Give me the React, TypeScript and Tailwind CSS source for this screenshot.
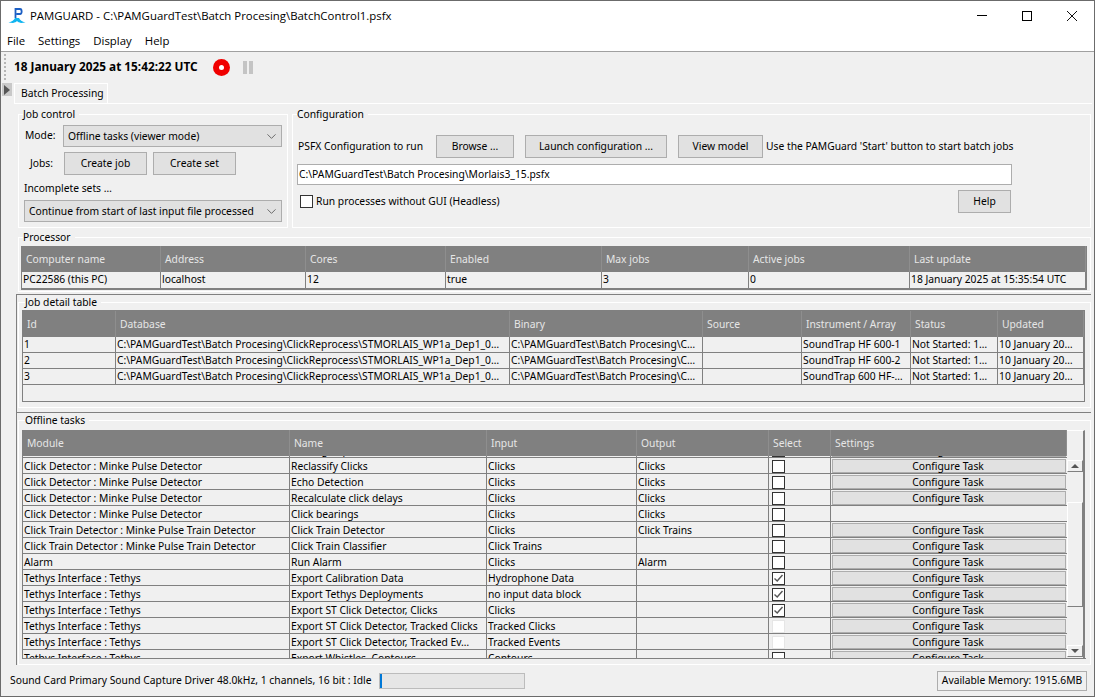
import type { ReactNode } from "react";
import { ChevronDown } from "lucide-react";

const processorCols = "grid-cols-[139px_145px_140px_156px_147px_161px_176px]";
const jobCols = "grid-cols-[93px_394px_193px_99px_109px_87px_86px]";
const taskCols = "grid-cols-[267px_197px_150px_132px_62px_236px]";

const processorHeader = ["Computer name", "Address", "Cores", "Enabled", "Max jobs", "Active jobs", "Last update"];
const processorRow = ["PC22586 (this PC)", "localhost", "12", "true", "3", "0", "18 January 2025 at 15:35:54 UTC"];

const jobHeader = ["Id", "Database", "Binary", "Source", "Instrument / Array", "Status", "Updated"];
const dbPath = "C:\\PAMGuardTest\\Batch Procesing\\ClickReprocess\\STMORLAIS_WP1a_Dep1_0…";
const binPath = "C:\\PAMGuardTest\\Batch Procesing\\C…";
const jobRows = [
  ["1", dbPath, binPath, "", "SoundTrap HF 600-1", "Not Started: 1…", "10 January 20…"],
  ["2", dbPath, binPath, "", "SoundTrap HF 600-2", "Not Started: 1…", "10 January 20…"],
  ["3", dbPath, binPath, "", "SoundTrap 600 HF-…", "Not Started: 1…", "10 January 20…"],
];

const taskHeader = ["Module", "Name", "Input", "Output", "Select", "Settings"];
const minke = "Click Detector : Minke Pulse Detector";
const train = "Click Train Detector : Minke Pulse Train Detector";
const tethys = "Tethys Interface : Tethys";

type Task = { module: string; name: string; input: string; output: string; state: "off" | "on" | "disabled"; noConfig?: boolean };

const tasks: Task[] = [
  { module: minke, name: "Reassign Species", input: "Clicks", output: "Clicks", state: "off" },
  { module: minke, name: "Reclassify Clicks", input: "Clicks", output: "Clicks", state: "off" },
  { module: minke, name: "Echo Detection", input: "Clicks", output: "Clicks", state: "off" },
  { module: minke, name: "Recalculate click delays", input: "Clicks", output: "Clicks", state: "off" },
  { module: minke, name: "Click bearings", input: "Clicks", output: "Clicks", state: "off", noConfig: true },
  { module: train, name: "Click Train Detector", input: "Clicks", output: "Click Trains", state: "off" },
  { module: train, name: "Click Train Classifier", input: "Click Trains", output: "", state: "off" },
  { module: "Alarm", name: "Run Alarm", input: "Clicks", output: "Alarm", state: "off" },
  { module: tethys, name: "Export Calibration Data", input: "Hydrophone Data", output: "", state: "on" },
  { module: tethys, name: "Export Tethys Deployments", input: "no input data block", output: "", state: "on" },
  { module: tethys, name: "Export ST Click Detector, Clicks", input: "Clicks", output: "", state: "on" },
  { module: tethys, name: "Export ST Click Detector, Tracked Clicks", input: "Tracked Clicks", output: "", state: "disabled" },
  { module: tethys, name: "Export ST Click Detector, Tracked Ev…", input: "Tracked Events", output: "", state: "disabled" },
  { module: tethys, name: "Export Whistles, Contours", input: "Contours", output: "", state: "off" },
];

function GroupBox({ title, className, legendClass = "", children }: { title: string; className: string; legendClass?: string; children: ReactNode }) {
  return (
    <fieldset className={`border border-white min-w-0 ${className}`}>
      <legend className={`pr-[4px] h-[14px] leading-[14px] ${legendClass}`}>{title}</legend>
      {children}
    </fieldset>
  );
}

function WinButton({ className, children }: { className: string; children: ReactNode }) {
  return (
    <button className={`bg-[#e1e1e1] border border-[#adadad] flex items-center justify-center ${className}`}>
      {children}
    </button>
  );
}

function Combo({ className, label }: { className: string; label: string }) {
  return (
    <div className={`bg-[#e1e1e1] border border-[#adadad] h-[22px] flex items-center pl-[4px] pr-[2px] ${className}`}>
      <span className="flex-1 whitespace-nowrap pt-[1px]">{label}</span>
      <ChevronDown className="w-[15px] h-[15px] text-[#444]" strokeWidth={1.2} />
    </div>
  );
}

function HeaderRow({ cols, labels }: { cols: string; labels: string[] }) {
  return (
    <div className={`grid ${cols} h-[26px] bg-[#808080] text-[#e6e6e6]`}>
      {labels.map((l, i) => (
        <div key={i} className="border-r border-[#8e8e8e] pl-[4px] flex items-center pt-[2px] overflow-hidden whitespace-nowrap">
          {l}
        </div>
      ))}
    </div>
  );
}

function DataRow({ cols, cells }: { cols: string; cells: string[] }) {
  return (
    <div className={`grid ${cols} h-[16px] border-b border-[#808080]`}>
      {cells.map((c, i) => (
        <div key={i} className="border-r border-[#808080] pl-[1px] leading-[14px] overflow-hidden whitespace-nowrap">
          {c}
        </div>
      ))}
    </div>
  );
}

function TaskCheck({ state }: { state: Task["state"] }) {
  return (
    <div className={`w-[13px] h-[13px] mt-[2px] ml-[3px] bg-white border ${state === "disabled" ? "border-[#e6e6e6]" : "border-[#333]"}`}>
      {state === "on" && (
        <svg viewBox="0 0 11 11" className="w-[11px] h-[11px]" fill="none" stroke="#555" strokeWidth="1.4">
          <path d="M1.5 5.5 L4.2 8 L9.5 2" />
        </svg>
      )}
    </div>
  );
}

function TaskRow({ task }: { task: Task }) {
  return (
    <div className={`grid ${taskCols} h-[16px] border-b border-[#808080] shrink-0`}>
      {[task.module, task.name, task.input, task.output].map((c, i) => (
        <div key={i} className="border-r border-[#808080] pl-[1px] leading-[16px] overflow-hidden whitespace-nowrap">
          {c}
        </div>
      ))}
      <div className="border-r border-[#808080]">
        <TaskCheck state={task.state} />
      </div>
      <div className="pl-[1px] pr-[1px] pt-[1px]">
        {!task.noConfig && (
          <div className="h-[14px] bg-[#e1e1e1] border border-[#adadad] flex items-center justify-center pt-[2px] pr-[2px]">Configure Task</div>
        )}
      </div>
    </div>
  );
}

function Scrollbar() {
  return (
    <div className="w-[18px] flex flex-col border-t border-white border-r-2 border-r-[#808080]">
      <div className="h-[26px] shrink-0" />
      <div className="flex-1 min-h-0 flex flex-col pt-[3px] pb-[1px]">
        <div className="h-[12px] bg-[#f0f0f0] border border-white border-r-[#808080] border-b-[#808080] flex items-center justify-center shrink-0">
          <svg viewBox="0 0 8 4" className="w-[8px] h-[4px]"><path d="M0 4 L4 0 L8 4 Z" fill="#555" /></svg>
        </div>
        <div className="flex-1 flex flex-col pt-[30px] pb-[38px]">
          <div className="flex-1 bg-[#f0f0f0] border border-white border-r-[#808080] border-b-[#808080]" />
        </div>
        <div className="h-[12px] bg-[#f0f0f0] border border-white border-r-[#808080] border-b-[#808080] flex items-center justify-center shrink-0">
          <svg viewBox="0 0 8 4" className="w-[8px] h-[4px]"><path d="M0 0 L4 4 L8 0 Z" fill="#555" /></svg>
        </div>
      </div>
    </div>
  );
}

export default function App() {
  return (
    <div className="w-[1095px] h-[697px] flex flex-col overflow-hidden bg-[#f0f0f0] text-black border border-[#6b6b6b] font-['Noto_Sans',sans-serif] text-[10.3px]">
      {/* title bar */}
      <div className="h-[29px] bg-white flex items-center shrink-0">
        <svg viewBox="0 0 18 16" className="w-[18px] h-[16px] ml-[7px]">
          <path d="M0.5 14.5 C4 13.5 6 12.5 7 10 L11 10 C12 12.5 14 13.5 17.5 14.5 L13 15 C11 14.5 10 14 9 13 C8 14 7 14.5 5 15 Z" fill="#10b4f0" />
          <path d="M7.5 10 L7.5 1 L12 1 C14.2 1 14.2 6 12 6 L8.5 6" fill="none" stroke="#1c5fc4" strokeWidth="1.8" />
        </svg>
        <span className="ml-[4px] text-[11.4px] font-['Open_Sans',sans-serif]">PAMGUARD - C:\PAMGuardTest\Batch Procesing\BatchControl1.psfx</span>
        <div className="ml-auto flex items-center gap-[35px] pr-[17px]">
          <div className="w-[10px] h-[1px] bg-black" />
          <div className="w-[10px] h-[10px] border border-black" />
          <svg viewBox="0 0 10 10" className="w-[10px] h-[10px]" stroke="#111" strokeWidth="1"><path d="M0 0 L10 10 M10 0 L0 10" /></svg>
        </div>
      </div>
      {/* menu bar */}
      <div className="h-[22px] bg-white flex items-center gap-[13px] pl-[6px] pt-[1px] border-b border-[#a0a0a0] shrink-0 text-[11.4px] font-['Open_Sans',sans-serif]">
        <span>File</span>
        <span>Settings</span>
        <span>Display</span>
        <span>Help</span>
      </div>
      {/* toolbar */}
      <div className="h-[30px] flex items-center shrink-0 pl-[3px]">
        <div className="w-[2px] h-[26px] border-l-2 border-dotted border-[#b5b5b5]" />
        <span className="ml-[8px] font-bold text-[11.8px]">18 January 2025 at 15:42:22 UTC</span>
        <div className="ml-[15px] w-[17px] h-[17px] rounded-full bg-[#f00000] flex items-center justify-center">
          <div className="w-[5px] h-[5px] rounded-full bg-white" />
        </div>
        <div className="ml-[13px] flex gap-[2px]">
          <div className="w-[4px] h-[13px] bg-[#c4c4c4]" />
          <div className="w-[4px] h-[13px] bg-[#c4c4c4]" />
        </div>
      </div>
      {/* body */}
      <div className="flex-1 flex min-h-0 pt-[1px]">
        <div className="w-[13px] shrink-0 pl-[1px]">
          <div className="w-[10px] h-[13px] bg-[#c8c8c8] flex items-center justify-center">
            <svg viewBox="0 0 6 10" className="w-[6px] h-[10px]"><path d="M0 0 L6 5 L0 10 Z" fill="#555" /></svg>
          </div>
        </div>
        <div className="flex-1 min-w-0 flex flex-col pr-[2px]">
          <div className="h-[20px] shrink-0 flex">
            <div className="w-[94px] bg-[#f0f0f0] border border-b-0 border-white flex items-center pl-[6px] whitespace-nowrap">Batch Processing</div>
          </div>
          <div className="h-[562px] shrink-0 border-t border-white pt-[3px] flex flex-col">
            {/* top row */}
            <div className="flex h-[121px] shrink-0 pl-[4px] pr-[1px] gap-[4px]">
              <GroupBox title="Job control" legendClass="-ml-[1px]" className="w-[270px] px-[5px] pt-[4px]">
                <div className="flex items-center">
                  <span className="w-[39px] pl-[1px]">Mode:</span>
                  <Combo className="flex-1" label="Offline tasks (viewer mode)" />
                </div>
                <div className="flex items-center mt-[5px] h-[23px]">
                  <span className="w-[40px] pl-[6px]">Jobs:</span>
                  <WinButton className="w-[83px] h-[23px]">Create job</WinButton>
                  <WinButton className="w-[83px] h-[23px] ml-[6px]">Create set</WinButton>
                </div>
                <div className="mt-[6px] h-[14px] leading-[14px]">Incomplete sets …</div>
                <Combo className="mt-[5px]" label="Continue from start of last input file processed" />
              </GroupBox>
              <GroupBox title="Configuration" className="flex-1 px-[4px] pt-[14px]">
                <div className="flex items-center h-[23px]">
                  <span className="w-[139px] pl-[1px]">PSFX Configuration to run</span>
                  <WinButton className="w-[78px] h-[23px]">Browse ...</WinButton>
                  <WinButton className="w-[142px] h-[23px] ml-[11px]">Launch configuration ...</WinButton>
                  <WinButton className="w-[85px] h-[23px] ml-[11px]">View model</WinButton>
                  <span className="ml-[3px] whitespace-nowrap">Use the PAMGuard 'Start' button to start batch jobs</span>
                </div>
                <div className="mt-[6px] w-[715px] h-[21px] bg-white border border-[#adadad] flex items-center pl-[1px]">
                  C:\PAMGuardTest\Batch Procesing\Morlais3_15.psfx
                </div>
                <div className="flex items-center mt-[5px] h-[23px] w-[714px]">
                  <div className="w-[13px] h-[13px] ml-[3px] bg-white border border-[#333]" />
                  <span className="ml-[3px]">Run processes without GUI (Headless)</span>
                  <WinButton className="ml-auto w-[53px] h-[23px]">Help</WinButton>
                </div>
              </GroupBox>
            </div>
            {/* processor */}
            <GroupBox title="Processor" legendClass="ml-[2px]" className="mt-[2px] ml-[4px] mr-[1px] h-[62px] shrink-0 pl-[2px] pr-[3px] pt-[2px]">
              <div className="border-b-2 border-l border-r border-[#808080]">
                <HeaderRow cols={processorCols} labels={processorHeader} />
                <div className={`grid ${processorCols} h-[16px]`}>
                  {processorRow.map((c, i) => (
                    <div key={i} className="border-r border-[#808080] pl-[1px] leading-[14px] whitespace-nowrap overflow-hidden">{c}</div>
                  ))}
                </div>
              </div>
            </GroupBox>
            {/* job detail */}
            <div className="mt-[2px] ml-[2px] mr-[1px] h-[118px] shrink-0 border-t border-l border-[#808080] pl-[1px]">
              <GroupBox title="Job detail table" legendClass="ml-[3px]" className="h-[113px] pl-[3px] pr-[4px] pt-[1px]">
                <div className="border border-[#808080] h-[92px] w-[1063px]">
                  <HeaderRow cols={jobCols} labels={jobHeader} />
                  {jobRows.map((r, i) => (
                    <DataRow key={i} cols={jobCols} cells={r} />
                  ))}
                </div>
              </GroupBox>
            </div>
            {/* offline tasks */}
            <div className="ml-[2px] mr-[1px] flex-1 min-h-0 border-t border-l border-[#808080] pl-[1px]">
              <GroupBox title="Offline tasks" legendClass="ml-[3px]" className="h-[252px] pl-[3px] pr-[4px] pt-[3px]">
                <div className="flex h-[229px] border-b border-[#808080]">
                  <div className="w-[1045px] flex flex-col min-w-0 border-l border-[#808080]">
                    <HeaderRow cols={taskCols} labels={taskHeader} />
                    <div className="flex-1 min-h-0 overflow-hidden">
                      <div className="flex flex-col -mt-[14px]">
                        {tasks.map((t, i) => (
                          <TaskRow key={i} task={t} />
                        ))}
                      </div>
                    </div>
                  </div>
                  <Scrollbar />
                </div>
              </GroupBox>
            </div>
          </div>
        </div>
      </div>
      {/* status bar */}
      <div className="h-[31px] shrink-0 flex items-center pl-[9px] pr-[7px]">
        <span className="whitespace-nowrap">Sound Card Primary Sound Capture Driver 48.0kHz, 1 channels, 16 bit : Idle</span>
        <div className="ml-[7px] w-[146px] h-[16px] bg-[#e6e6e6] border border-[#bcbcbc] mt-[1px]">
          <div className="w-[2px] h-full bg-[#0078d7]" />
        </div>
        <div className="ml-auto w-[150px] h-[20px] border border-[#adadad] flex items-center justify-center whitespace-nowrap">Available Memory: 1915.6MB</div>
      </div>
    </div>
  );
}
